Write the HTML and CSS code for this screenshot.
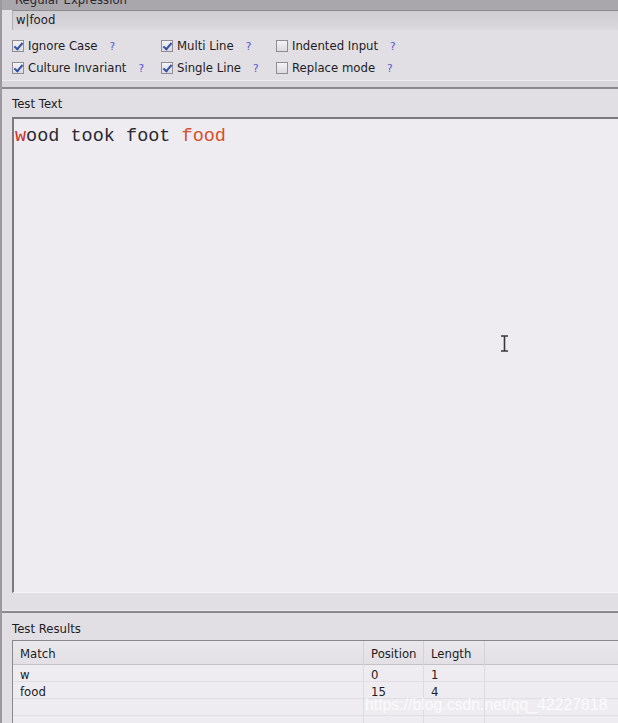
FILE: index.html
```html
<!DOCTYPE html>
<html>
<head>
<meta charset="utf-8">
<link rel="stylesheet" href="styles.css">
</head>
<body>
<div class="window">
  <section class="regex-panel">
    <div class="panel-title"><span>Regular Expression</span></div>
    <div class="regex-input">w|food</div>
    <div class="options">
      <label class="opt"><span class="cb on"></span>Ignore Case<span class="help">?</span></label>
      <label class="opt"><span class="cb on"></span>Multi Line<span class="help">?</span></label>
      <label class="opt"><span class="cb"></span>Indented Input<span class="help">?</span></label>
      <label class="opt"><span class="cb on"></span>Culture Invariant<span class="help">?</span></label>
      <label class="opt"><span class="cb on"></span>Single Line<span class="help">?</span></label>
      <label class="opt"><span class="cb"></span>Replace mode<span class="help">?</span></label>
    </div>
  </section>

  <section class="text-panel">
    <div class="label">Test Text</div>
    <div class="editor">
      <div class="code"><span class="m1">w</span>ood took foot <span class="m2">food</span></div>
      <svg class="ibeam" width="9" height="17" viewBox="0 0 9 17"><path d="M1 1h7M1 16h7M4.5 1v15" stroke="#3a383d" stroke-width="1.6" fill="none"/></svg>
    </div>
    <div class="editor-foot"></div>
  </section>

  <section class="results-panel">
    <div class="label">Test Results</div>
    <div class="grid">
      <div class="row head">
        <div class="c c1">Match</div><div class="c c2">Position</div><div class="c c3">Length</div><div class="c c4"></div>
      </div>
      <div class="row">
        <div class="c c1">w</div><div class="c c2">0</div><div class="c c3">1</div><div class="c c4"></div>
      </div>
      <div class="row">
        <div class="c c1">food</div><div class="c c2">15</div><div class="c c3">4</div><div class="c c4"></div>
      </div>
      <div class="row">
        <div class="c c1"></div><div class="c c2"></div><div class="c c3"></div><div class="c c4"></div>
      </div>
      <div class="row">
        <div class="c c1"></div><div class="c c2"></div><div class="c c3"></div><div class="c c4"></div>
      </div>
      <div class="watermark">https://blog.csdn.net/qq_42227818</div>
    </div>
  </section>
</div>
</body>
</html>
```

FILE: styles.css
```css
html, body {
  margin: 0;
  padding: 0;
  background: #e2dfe4;
}
body {
  font-family: "DejaVu Sans", Verdana, sans-serif;
  font-size: 11.7px;
  color: #1d1c24;
}
.window {
  width: 618px;
  height: 723px;
  overflow: hidden;
  border-left: 2px solid #9b98a0;
  box-sizing: border-box;
  display: flex;
  flex-direction: column;
  background: #e2dfe4;
}

/* Regex panel */
.regex-panel {
  flex: none;
  border-bottom: 2px solid #8b888e;
}
.panel-title {
  height: 10px;
  background: #a9a6ac;
  overflow: hidden;
  padding-left: 13px;
}
.panel-title span {
  display: block;
  margin-top: -8px;
  line-height: 16px;
  color: #2a2930;
}
.regex-input {
  margin-left: 10px;
  height: 19px;
  line-height: 19px;
  border-top: 1px solid #8e8b91;
  border-left: 1px solid #b2afb5;
  background: linear-gradient(#cfccd2, #dcd9de);
  padding-left: 3px;
  color: #1d1c24;
}
.options {
  display: grid;
  grid-template-columns: 149px 115px 1fr;
  grid-auto-rows: 22px;
  padding: 5px 0 1px 10px;
  border-bottom: 1px solid #eeecf0;
}
.opt {
  display: flex;
  align-items: center;
  white-space: nowrap;
}
.cb {
  width: 10px;
  height: 10px;
  border: 1px solid #8f8c93;
  background: linear-gradient(#f3f2f5, #dcdadf);
  margin-right: 4px;
  position: relative;
  flex: none;
}
.cb.on::after {
  content: "";
  position: absolute;
  left: 3px;
  top: 0px;
  width: 3px;
  height: 7px;
  border-right: 2px solid #3552a8;
  border-bottom: 2px solid #3552a8;
  transform: rotate(40deg);
}
.help {
  color: #5252d6;
  font-size: 10.5px;
  margin-left: 12px;
}
.regex-panel::after {
  content: "";
  display: block;
  height: 6px;
  background: #d9d6db;
}

/* Test text panel */
.text-panel {
  flex: none;
  border-bottom: 2px solid #8b888e;
}
.label {
  height: 28px;
  line-height: 31px;
  padding-left: 10px;
  box-sizing: border-box;
}
.editor {
  margin-left: 10px;
  height: 473px;
  border-top: 2px solid #7a777d;
  border-left: 2px solid #7a777d;
  border-bottom: 1px solid #f6f4f8;
  background: #efecf1;
  position: relative;
}
.code {
  font-family: "Liberation Mono", "DejaVu Sans Mono", monospace;
  font-size: 18.5px;
  line-height: 30px;
  padding-top: 3px;
  padding-left: 1px;
  color: #2b2a33;
}
.m1 { color: #c8322a; }
.m2 { color: #d4502e; }
.ibeam {
  position: absolute;
  left: 486px;
  top: 216px;
}
.editor-foot {
  height: 18px;
  border-bottom: 1px solid #ebe9ee;
  box-sizing: border-box;
}

/* Results panel */
.results-panel {
  flex: 1;
}
.results-panel .label {
  height: 27px;
  line-height: 32px;
}
.grid {
  margin-left: 10px;
  border-top: 1px solid #8a878d;
  border-left: 1px solid #8a878d;
  background: #efecf1;
  position: relative;
  height: 90px;
}
.row {
  display: grid;
  grid-template-columns: 351px 60px 61px 1fr;
  height: 17px;
  border-bottom: 1px solid #e0dde3;
  box-sizing: border-box;
}
.row.head {
  height: 24px;
  background: linear-gradient(#ebe8ed, #e3e0e5);
  border-bottom: 1px solid #c4c1c7;
}
.c {
  padding-left: 7px;
  border-right: 1px solid #dddae0;
  line-height: 20px;
  white-space: nowrap;
}
.head .c {
  line-height: 26px;
  border-right: 1px solid #d4d1d7;
}
.c4 { border-right: none; }
.head .c4 { border-right: none; }
.watermark {
  position: absolute;
  left: 352px;
  top: 55px;
  font-family: "Liberation Sans", Arial, sans-serif;
  font-size: 15.8px;
  color: rgba(255, 255, 255, 0.75);
  white-space: nowrap;
}
```
